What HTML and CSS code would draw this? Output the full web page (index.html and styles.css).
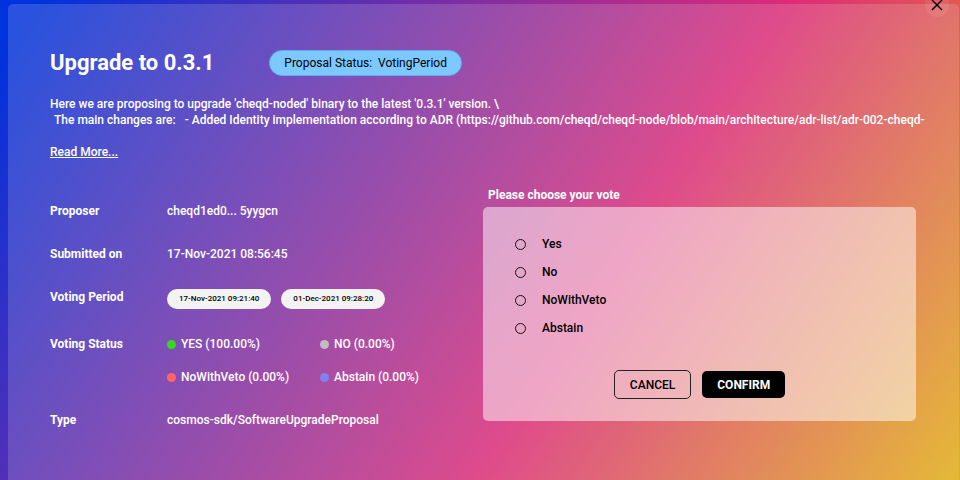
FILE: index.html
```html
<!DOCTYPE html>
<html lang="en">
<head>
<meta charset="utf-8">
<title>Upgrade to 0.3.1</title>
<link rel="stylesheet" href="styles.css">
</head>
<body>
<main class="panel">
  <button class="close" type="button" aria-label="Close">
    <svg viewBox="0 0 12 12" width="12" height="12"><path d="M1 1l10 10M11 1L1 11" fill="none" stroke="#000" stroke-width="1.4"/></svg>
  </button>
  <header class="head">
    <h1 class="title">Upgrade to 0.3.1</h1>
    <span class="status">Proposal Status:&nbsp; VotingPeriod</span>
  </header>
  <p class="description">Here we are proposing to upgrade 'cheqd-noded' binary to the latest '0.3.1' version. \
<span class="changes">The main changes are:&nbsp;&nbsp; - Added Identity implementation according to ADR (https://github.com/cheqd/cheqd-node/blob/main/architecture/adr-list/adr-002-cheqd-</span></p>
  <a class="more" href="#">Read More...</a>
  <div class="columns">
    <dl class="details">
      <dt>Proposer</dt><dd>cheqd1ed0... 5yygcn</dd>
      <dt>Submitted on</dt><dd>17-Nov-2021 08:56:45</dd>
      <dt>Voting Period</dt>
      <dd class="period"><span class="date">17-Nov-2021 09:21:40</span><span class="date">01-Dec-2021 09:28:20</span></dd>
      <dt>Voting Status</dt>
      <dd class="tally">
        <span class="count yes">YES (100.00%)</span>
        <span class="count no">NO (0.00%)</span>
        <span class="count veto">NoWithVeto (0.00%)</span>
        <span class="count abstain">Abstain (0.00%)</span>
      </dd>
      <dt>Type</dt><dd>cosmos-sdk/SoftwareUpgradeProposal</dd>
    </dl>
    <form class="vote">
      <h2 class="vote-title" id="vote-title">Please choose your vote</h2>
      <div class="card">
        <div class="options" role="radiogroup" aria-labelledby="vote-title">
          <label class="option"><input type="radio" name="vote" value="yes">Yes</label>
          <label class="option"><input type="radio" name="vote" value="no">No</label>
          <label class="option"><input type="radio" name="vote" value="veto">NoWithVeto</label>
          <label class="option"><input type="radio" name="vote" value="abstain">Abstain</label>
        </div>
        <div class="actions">
          <button class="cancel" type="button">CANCEL</button>
          <button class="confirm" type="submit">CONFIRM</button>
        </div>
      </div>
    </form>
  </div>
</main>
</body>
</html>
```
FILE: styles.css
```css
* { box-sizing: border-box; }
body {
  margin: 0;
  min-height: 100vh;
  display: flex;
  background: linear-gradient(123deg, #0032dd 0%, #0032dd 3%, #de2a78 62%, #e5b012 100%);
  color: #fff;
  font: 500 12px/16px Roboto, sans-serif;
}
h1, h2, p, dl, dd { margin: 0; }
button, input { font: inherit; margin: 0; }
.panel {
  position: relative;
  flex: 1;
  min-width: 0;
  margin: 4px 1px 0 8px;
  padding: 46px 43px 0 42px;
  border-radius: 5px 5px 0 0;
  background: rgba(225, 225, 225, 0.18);
}
.close {
  position: absolute;
  top: -11px;
  right: 10px;
  width: 24px;
  height: 24px;
  display: grid;
  place-items: center;
  padding: 0;
  border: 0;
  border-radius: 50%;
  background: rgba(255, 255, 255, 0.08);
}
.head { display: flex; align-items: center; gap: 55px; }
.title { font-size: 22px; line-height: 26px; font-weight: 700; }
.status {
  padding: 4px 14px;
  border: 1px solid #5fadf0;
  border-radius: 13px;
  background: #7dc8ff;
  color: #000;
  font-weight: 400;
}
.description { margin-top: 20px; white-space: pre; }
.changes { padding-left: 4px; }
.more { display: inline-block; margin-top: 16px; color: #fff; }
.columns {
  display: grid;
  grid-template-columns: 1fr 1fr;
  align-items: start;
  margin-top: 27px;
}
.details {
  display: grid;
  grid-template-columns: 117px 1fr;
  row-gap: 27px;
  margin-top: 16px;
}
.details dt { font-weight: 700; }
.period { display: flex; gap: 10px; }
.date {
  padding: 3px 12px;
  border-radius: 10px;
  background: #f3f3f3;
  color: #000;
  font-size: 8px;
  line-height: 14px;
}
.tally {
  display: grid;
  grid-template-columns: 153px 1fr;
  row-gap: 17px;
}
.count { display: flex; align-items: center; gap: 5px; }
.count::before {
  content: "";
  width: 9px;
  height: 9px;
  border-radius: 50%;
  background: var(--dot);
}
.yes { --dot: #33d91a; }
.no { --dot: #bfbfbf; }
.veto { --dot: #ff6464; }
.abstain { --dot: #8082ee; }
.vote-title { margin-left: 5px; font-size: 12px; line-height: 16px; font-weight: 700; }
.card {
  margin-top: 4px;
  padding: 29px 32px 22px;
  border-radius: 5px;
  background: rgba(255, 255, 255, 0.5);
  color: #000;
}
.options { display: grid; row-gap: 12px; }
.option { display: flex; align-items: center; gap: 16px; }
.option input {
  appearance: none;
  width: 11px;
  height: 11px;
  border: 1px solid #111;
  border-radius: 50%;
}
.actions {
  display: flex;
  justify-content: center;
  align-items: center;
  gap: 11px;
  margin-top: 34px;
}
.cancel, .confirm { padding: 0 15px; border-radius: 5px; }
.cancel { height: 29px; border: 1px solid #222; background: none; color: #000; }
.confirm { height: 27px; border: 0; background: #000; color: #fff; font-weight: 700; }
```
